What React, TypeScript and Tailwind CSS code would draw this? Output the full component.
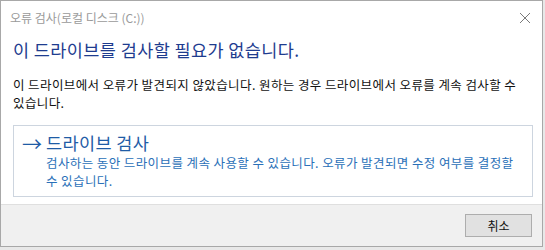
export default function App() {
  const font = { fontFamily: '"Noto Sans CJK KR", "Noto Sans", sans-serif' };
  return (
    <div className="w-[545px] h-[250px] bg-[#e8e8e8]" style={font}>
      <div className="w-[543px] h-[247px] bg-white border border-[#a8a8a8] flex flex-col">
        {/* title bar */}
        <div className="h-[34px] flex items-center justify-between pl-[9px] pr-[11px]">
          <span className="text-[12px] text-[#9a9a9a] whitespace-nowrap">오류 검사(로컬 디스크 (C:))</span>
          <svg width="12" height="12" viewBox="0 0 12 12" className="text-[#7a7a7a]">
            <path d="M1 1L11 11M11 1L1 11" stroke="currentColor" strokeWidth="1" />
          </svg>
        </div>

        <div className="flex-1 pl-[12px] pr-[10px]">
          <h1 className="text-[17.5px] tracking-[0.4px] leading-[24px] text-[#1e3c8f] whitespace-nowrap mt-[3px]">
            이 드라이브를 검사할 필요가 없습니다.
          </h1>
          <p className="text-[12.5px] tracking-[0.4px] leading-[18px] text-[#111] mt-[14px] whitespace-nowrap">
            이 드라이브에서 오류가 발견되지 않았습니다. 원하는 경우 드라이브에서 오류를 계속 검사할 수
            <br />
            있습니다.
          </p>

          <button className="mt-[13px] w-[520px] h-[72px] border border-[#cdd5df] text-left flex items-start pl-[8px] pt-[6px]">
            <span className="text-[20px] leading-[24px] text-[#1f5ca6] w-[24px]">→</span>
            <span className="flex flex-col">
              <span className="text-[17.5px] tracking-[0.4px] leading-[22px] text-[#1f5ca6] whitespace-nowrap">드라이브 검사</span>
              <span className="text-[12.5px] tracking-[0.4px] leading-[18px] text-[#2a70b8] whitespace-nowrap">
                검사하는 동안 드라이브를 계속 사용할 수 있습니다. 오류가 발견되면 수정 여부를 결정할
                <br />
                수 있습니다.
              </span>
            </span>
          </button>
        </div>

        {/* footer */}
        <div className="h-[42px] bg-[#f0f0f0] border-t border-[#dfdfdf] flex items-center justify-end pr-[10px]">
          <button className="w-[67px] h-[23px] bg-[#e1e1e1] border border-[#adadad] text-[12px] text-[#111] flex items-center justify-center">
            취소
          </button>
        </div>
      </div>
    </div>
  );
}
